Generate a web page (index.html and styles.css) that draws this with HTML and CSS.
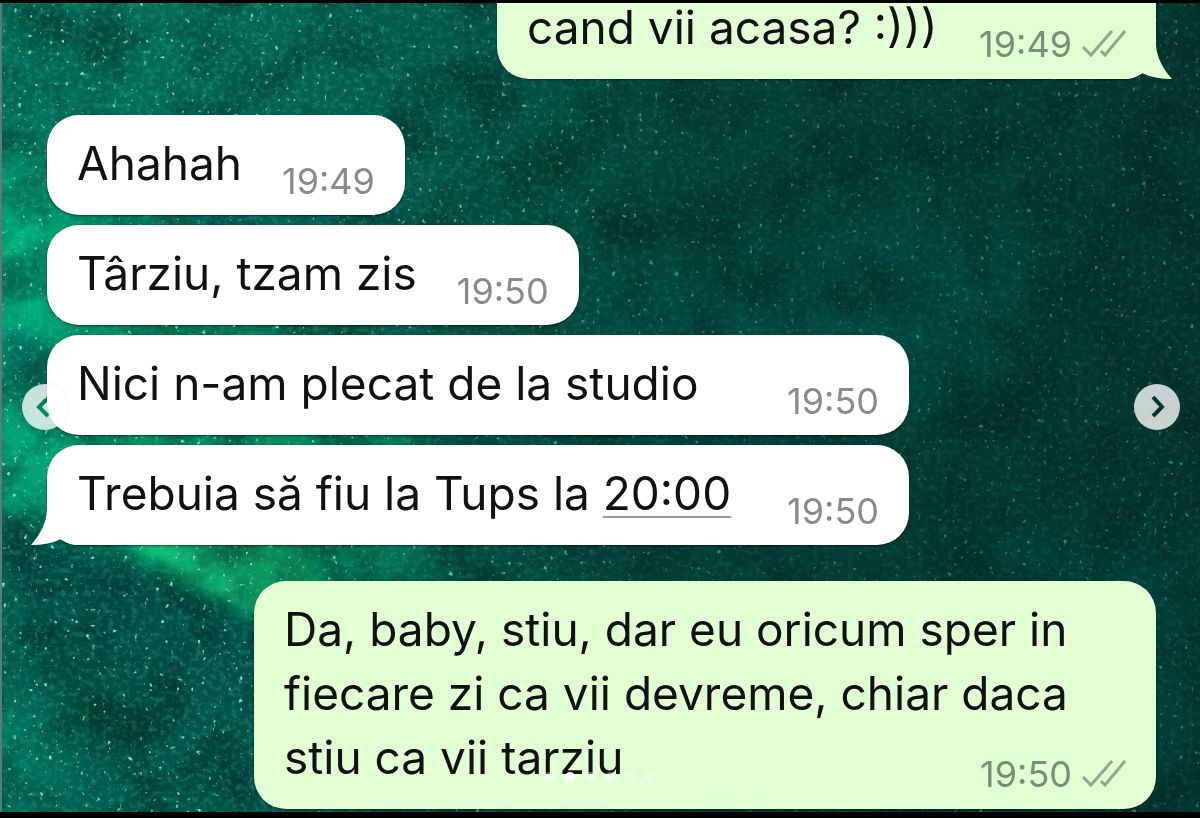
FILE: index.html
```html
<!DOCTYPE html>
<html lang="ro">
<head>
  <meta charset="UTF-8">
  <meta name="viewport" content="width=device-width, initial-scale=1.0">
  <title>Chat</title>
  <link rel="stylesheet" href="styles.css">
</head>
<body>
  <main class="chat">
    <!-- night sky wallpaper -->
    <svg class="wallpaper" viewBox="0 0 1200 809" preserveAspectRatio="none" aria-hidden="true">
      <defs>
        <linearGradient id="sky" x1="0" y1="0.3" x2="1" y2="0.4">
          <stop offset="0" stop-color="#04745f"/>
          <stop offset="0.3" stop-color="#045b4d"/>
          <stop offset="0.55" stop-color="#044139"/>
          <stop offset="1" stop-color="#04332d"/>
        </linearGradient>
        <linearGradient id="fade">
          <stop offset="0.2" stop-color="#fff"/>
          <stop offset="0.6" stop-color="#666"/>
        </linearGradient>
        <mask id="left-heavy"><rect width="1200" height="809" fill="url(#fade)"/></mask>
        <filter id="soft" x="-50%" y="-50%" width="200%" height="200%"><feGaussianBlur stdDeviation="28"/></filter>
        <filter id="edge" x="-50%" y="-50%" width="200%" height="200%"><feGaussianBlur stdDeviation="8"/></filter>
        <filter id="clouds" x="0" y="0" width="100%" height="100%" color-interpolation-filters="sRGB">
          <feTurbulence type="fractalNoise" baseFrequency="0.016" numOctaves="5" seed="8"/>
          <feColorMatrix values="0 0 0 0 0  0 0 0 0 0.14  0 0 0 0 0.13  2.8 0 0 0 -1.15"/>
        </filter>
        <filter id="grain" x="0" y="0" width="100%" height="100%" color-interpolation-filters="sRGB">
          <feTurbulence type="fractalNoise" baseFrequency="0.17" numOctaves="3" seed="3"/>
          <feColorMatrix values="0 0 0 0 0.2  0 0 0 0 0.75  0 0 0 0 0.6  0 2.4 0 0 -1.1"/>
        </filter>
        <filter id="stars" x="0" y="0" width="100%" height="100%" color-interpolation-filters="sRGB">
          <feTurbulence type="fractalNoise" baseFrequency="0.19" numOctaves="2" seed="21"/>
          <feColorMatrix values="0 0 0 0 0.5  0 0 0 0 0.85  0 0 0 0 0.72  0 0 8 0 -5.6"/>
          <feGaussianBlur stdDeviation="0.6"/>
        </filter>
      </defs>
      <rect width="1200" height="809" fill="url(#sky)"/>
      <g filter="url(#soft)">
        <path d="M0 560L120 550L300 640L280 809H0Z" fill="#04524a"/>
        <path d="M960 520H1200V809H1160Z" fill="#04463f" opacity="0.6"/>
        <path d="M0 160L60 180L420 440L420 560L260 600L0 470Z" fill="#08925f" opacity="0.8"/>
        <ellipse cx="10" cy="270" rx="50" ry="100" fill="#06b484"/>
        <ellipse cx="20" cy="450" rx="60" ry="60" fill="#06a87a"/>
        <ellipse cx="20" cy="750" rx="50" ry="40" fill="#068068"/>
        <path d="M600 290L1000 180L1060 260L940 420H600Z" fill="#04544a" opacity="0.5"/>
      </g>
      <g filter="url(#edge)">
        <path d="M0 515L100 555L175 585L250 622L310 650L200 690L80 640L0 570Z" fill="#04504a"/>
        <path d="M90 528L150 548L190 576L254 612L330 610L300 540Z" fill="#07975f"/>
        <path d="M120 538L190 580L250 608L210 570L160 540Z" fill="#10d080"/>
        <path d="M0 325L50 340L50 390L0 380Z" fill="#046a5c"/>
      </g>
      <rect width="1200" height="809" filter="url(#clouds)" opacity="0.5"/>
      <g mask="url(#left-heavy)">
        <rect width="1200" height="809" filter="url(#grain)" opacity="0.36"/>
        <rect width="1200" height="809" filter="url(#stars)"/>
      </g>
    </svg>

    <section class="group sent">
      <div class="bubble cut">
        <p class="text">cand vii acasa? :)))</p>
        <span class="meta">
          <time>19:49</time>
          <svg class="checks" viewBox="0 0 44 30" aria-hidden="true"><path d="M1 18L9 26L30 2M19 22L23 26L43 2"/></svg>
        </span>
        <svg class="tail" viewBox="0 0 52 40" aria-hidden="true"><path d="M0 0H36V4Q36 22 52 40Q34 40 22 34Q16 39 8 40H0Z"/></svg>
      </div>
    </section>

    <section class="group received">
      <div class="bubble">
        <p class="text">Ahahah</p>
        <span class="meta"><time>19:49</time></span>
      </div>
      <div class="bubble">
        <p class="text">Târziu, tzam zis</p>
        <span class="meta"><time>19:50</time></span>
      </div>
      <div class="bubble wide">
        <p class="text">Nici n-am plecat de la studio</p>
        <span class="meta"><time>19:50</time></span>
      </div>
      <div class="bubble wide">
        <p class="text">Trebuia să fiu la Tups la <a href="#">20:00</a></p>
        <span class="meta"><time>19:50</time></span>
        <svg class="tail" viewBox="0 0 52 40" aria-hidden="true"><path d="M52 0H16V4Q16 22 0 40Q18 40 30 34Q36 39 44 40H52Z"/></svg>
      </div>
    </section>

    <section class="group sent">
      <div class="bubble long">
        <p class="text">Da, baby, stiu, dar eu oricum sper in fiecare zi ca vii devreme, chiar daca stiu ca vii tarziu</p>
        <span class="meta">
          <time>19:50</time>
          <svg class="checks" viewBox="0 0 44 30" aria-hidden="true"><path d="M1 18L9 26L30 2M19 22L23 26L43 2"/></svg>
        </span>
      </div>
    </section>
  </main>

  <!-- carousel controls, the chevrons are cut out of the discs -->
  <button class="nav prev" type="button" aria-label="Previous">
    <svg viewBox="0 0 46 46">
      <mask id="cut-left"><rect width="46" height="46" fill="#fff"/><path d="M26 14L17 23L26 32" fill="none" stroke="#000" stroke-width="4"/></mask>
      <circle cx="23" cy="23" r="23" mask="url(#cut-left)"/>
    </svg>
  </button>
  <button class="nav next" type="button" aria-label="Next">
    <svg viewBox="0 0 46 46">
      <mask id="cut-right"><rect width="46" height="46" fill="#fff"/><path d="M19 13L28 23L19 32" fill="none" stroke="#000" stroke-width="4"/></mask>
      <circle cx="23" cy="23" r="23" mask="url(#cut-right)"/>
    </svg>
  </button>
  <div class="dots">
    <span class="dot"></span>
    <span class="dot active"></span>
    <span class="dot"></span>
    <span class="dot"></span>
    <span class="dot"></span>
    <span class="dot"></span>
  </div>
</body>
</html>
```

FILE: styles.css
```css
* {
  box-sizing: border-box;
}

body {
  margin: 0;
  position: relative;
  background: #000;
  font-family: Inter, "Liberation Sans", sans-serif;
}

.chat {
  position: relative;
  height: 100vh;
  border-top: 3px solid #000;
  border-bottom: 6px solid #000;
  padding: 0 44px 3px 47px;
  overflow: hidden;
  display: flex;
  flex-direction: column;
  justify-content: flex-end;
  gap: 36px;
}

.wallpaper {
  position: absolute;
  inset: 0;
  width: 100%;
  height: 100%;
  border-left: 2px solid #5c7b78;
}

.group {
  position: relative;
  display: flex;
  flex-direction: column;
  gap: 10px;
}

.received {
  align-items: flex-start;
  --bubble: #fff;
  --meta: #8a8a8a;
}

.sent {
  align-items: flex-end;
  --bubble: #e2ffd4;
  --meta: #7b8d74;
}

.bubble {
  position: relative;
  display: flex;
  justify-content: space-between;
  align-items: flex-end;
  gap: 40px;
  padding: 16px 30px 20px;
  border-radius: 32px;
  background: var(--bubble);
  box-shadow: 0 1px 2px rgba(0, 0, 0, 0.5);
  color: #111;
  font-size: 46px;
  line-height: 64px;
}

.wide {
  width: 100%;
  max-width: 862px;
}

/* scrolled partly out of view */
.cut {
  width: 100%;
  max-width: 659px;
  min-height: 140px;
}

.long {
  display: block;
  max-width: 902px;
}

.text {
  margin: 0;
}

.text a {
  color: inherit;
  text-decoration: underline;
  text-decoration-color: #999;
  text-decoration-thickness: 2px;
  text-underline-offset: 6px;
}

.meta {
  display: flex;
  align-items: center;
  gap: 10px;
  color: var(--meta);
  font-size: 36px;
  line-height: 28px;
}

/* the time sits at the end of the last line */
.long .text {
  display: inline;
}

.long .meta {
  float: right;
  margin-top: 34px;
}

.checks {
  width: 44px;
  height: 30px;
  fill: none;
  stroke: #93a78b;
  stroke-width: 3;
}

.tail {
  position: absolute;
  bottom: 0;
  width: 52px;
  height: 40px;
  fill: var(--bubble);
}

.sent .tail {
  right: -16px;
}

.received .tail {
  left: -16px;
}

.nav {
  position: absolute;
  top: 50%;
  width: 46px;
  height: 46px;
  margin-top: -25px;
  padding: 0;
  border: none;
  border-radius: 50%;
  background: none;
  cursor: pointer;
}

.nav svg {
  display: block;
  fill: rgba(255, 255, 255, 0.78);
}

.prev {
  left: 22px;
  box-shadow: 0 0 6px rgba(0, 0, 0, 0.06);
}

.next {
  right: 20px;
}

.dots {
  position: absolute;
  left: 0;
  right: 0;
  bottom: 36px;
  display: flex;
  justify-content: center;
  gap: 10px;
}

.dot {
  width: 10px;
  height: 10px;
  border-radius: 50%;
  background: rgba(255, 255, 255, 0.4);
}

.dot.active {
  background: #fff;
}
```
